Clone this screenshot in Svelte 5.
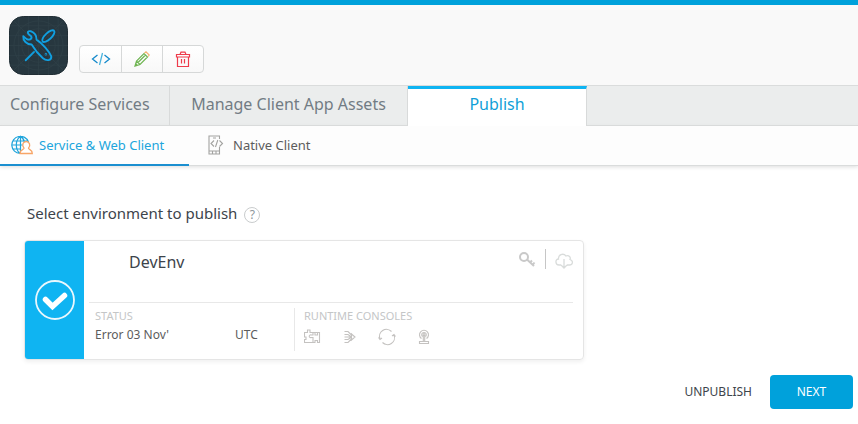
<script>
  const tabs = [
    { label: 'Configure Services' },
    { label: 'Manage Client App Assets' },
    { label: 'Publish', active: true }
  ];
</script>

<div class="page">
  <header>
    <svg class="logo" viewBox="0 0 60 60" role="img" aria-label="App logo">
      <rect x="0.5" y="0.5" width="59" height="59" rx="14" fill="#27373f" stroke="#1f2c33" />
      <g fill="none" stroke="#304149" stroke-width="0.700">
        <path d="M10 1V59M20 0V60M30 0V60M40 0V60M50 1V59M1 10H59M0 20H60M0 30H60M0 40H60M1 50H59M4 4L56 56M56 4L4 56" />
        <circle cx="30" cy="30" r="25" /><circle cx="30" cy="30" r="17" />
      </g>
      <g fill="none" stroke="#109fe0" stroke-width="1.900" stroke-linecap="round" stroke-linejoin="round">
        <path d="M22 15.500C26 17 28 20 28 24C34 28 41 36 43 41C43.500 45.500 38 46 34.500 43C30 39 26 34 23 29C18 29 14 25 14.500 20.500L18 23.500C21 25 24 23 22.500 20.500L20 18.500C18 16 20 15 22 15.500Z" />
        <ellipse cx="40" cy="20.500" rx="8" ry="3.200" transform="rotate(-43 40 20.500)" />
        <path d="M25.500 36.500L17 45" /><circle cx="37.500" cy="39" r="0.300" />
      </g>
    </svg>
    <div class="tools">
      <button aria-label="View code">
        <svg width="20" height="16" viewBox="0 0 20 16" fill="none" stroke="#168acb" stroke-width="1.300"><path d="M6.500 4L1.500 8L6.500 12M13.500 4L18.500 8L13.500 12" /><path d="M11.500 2L8.500 14" stroke="#49b3de" /></svg>
      </button>
      <button aria-label="Edit">
        <svg width="16" height="16" viewBox="0 0 16 16" fill="none" stroke="#6fb552" stroke-width="1.200"><path d="M1 15L2.500 10L10 2.500L13.500 6L6 13.500ZM2.500 10L6 13.500M4 11.500L11.500 4M1 15L3 13" /><path d="M10.500 2L12 0.800L15.200 4L14 5.500" stroke="#f5b071" /></svg>
      </button>
      <button aria-label="Delete">
        <svg width="16" height="17" viewBox="0 0 16 17" fill="none" stroke="#ee3b4b" stroke-width="1.200"><path d="M1.500 3.500H14.500V6H1.500ZM2.500 6V15.500H13.500V6M5 3.500L6 1.200H10L11 3.500M6.500 8V12.500M9.500 8V12.500" /></svg>
      </button>
    </div>
  </header>

  <nav class="tabs" aria-label="Application">
    {#each tabs as tab}
      <a href="#tab" class:active={tab.active} aria-current={tab.active ? 'page' : undefined}>{tab.label}</a>
    {/each}
  </nav>

  <nav class="subtabs" aria-label="Publish target">
    <a href="#web" class="active" aria-current="page">
      <svg width="22" height="20" viewBox="0 0 22 20" fill="none" stroke="#20a5dc" stroke-width="1.200">
        <path d="M9 18.500A8.600 8.600 0 1 1 17.500 7M9 18.500C4 14 4 5 9.500 1.200C12 3 13.300 5 13.500 7.500M9.500 1.200V18M1.500 6H16.500M1 10H12M2 14H9.500" />
        <path d="M13 13.200C10.500 10 12 6.500 15.200 6.500S20 10 17.500 13.200C17.500 14.500 21.300 14.500 21.300 18.500H9C9 14.500 13 14.500 13 13.200Z" fill="#fff" stroke="#f7a567" stroke-width="1.300" />
      </svg>
      <span>Service &amp; Web Client</span>
    </a>
    <a href="#native">
      <svg width="16" height="20" viewBox="0 0 16 20" fill="none" stroke="#a3a3a1" stroke-width="1.100">
        <path d="M11.500 4V1H1V19H11.500V12M1 16H11.500M5 3H8M4.500 16V19M8 16V19M6 5.500L3 8.500L6 11.500M11.500 5.500L14.500 8.500L11.500 11.500M9.800 5L7.500 12" />
      </svg>
      <span>Native Client</span>
    </a>
  </nav>

  <main>
    <div class="heading">
      <h1>Select environment to publish</h1>
      <button class="help" aria-label="Help">?</button>
    </div>

    <section class="card">
      <label class="pick">
        <input type="checkbox" checked aria-label="Select DevEnv" />
        <svg viewBox="0 0 40 40" aria-hidden="true"><circle cx="20" cy="20" r="19" fill="none" stroke="#e9f7fd" stroke-width="1.800" /><path d="M10.500 19.500L17.500 26.500L29.500 15.500" fill="none" stroke="#fff" stroke-width="5.500" stroke-linecap="round" stroke-linejoin="miter" /></svg>
      </label>
      <div class="body">
        <div class="top">
          <h2>DevEnv</h2>
          <div class="actions">
            <button aria-label="Keys">
              <svg width="18" height="17" viewBox="0 0 18 17" fill="none" stroke="#c9c9c9" stroke-width="2"><circle cx="6" cy="6" r="4" /><path d="M9 8.500L16 15M12 11.500L14 9.500M14.500 14L16.500 11.500" /></svg>
            </button>
            <button class="download" aria-label="Download">
              <svg width="18" height="16" viewBox="0 0 18 16" fill="none" stroke="#d9dcdb" stroke-width="1.300"><path d="M6 12H4C0 12 0 6 3.500 6C3 2 8 -0.500 11 3C14 2 16 4 15 6.500C19 8 17.500 12 14.500 12H12M9 6V15M6 12L9 15L12 12" /></svg>
            </button>
          </div>
        </div>
        <div class="bottom">
          <div class="status">
            <h3>STATUS</h3>
            <p><span>Error 03 Nov'</span><span>UTC</span></p>
          </div>
          <div class="consoles">
            <h3>RUNTIME CONSOLES</h3>
            <div class="icons">
              <button aria-label="Integration console">
                <svg width="18" height="16" viewBox="0 0 18 16"><path d="M0.500 3.500H3.500V1H6V3.500H9V6H7.500C4.500 5 4.500 9.500 7.500 8.500H9V13.500H0.500V10.500H2V8H0.500ZM9 3.500H15.500V13.500H13.500V11.500H11V13.500H9M11 3.500V6H13.500V3.500" /></svg>
              </button>
              <button aria-label="Orchestration console">
                <svg width="18" height="16" viewBox="0 0 18 16"><path d="M3.500 2.500H7L10.500 6M3.500 5.500H7L10.500 8M3.500 8H10.500M3.500 10.500H7L10.500 8M3.500 13.500H7L10.500 10M10.500 5L14 8L10.500 11Z" /></svg>
              </button>
              <button aria-label="Sync console">
                <svg width="18" height="18" viewBox="0 0 18 18"><path d="M2 11A7 7 0 0 1 13.500 3.500M16 7A7 7 0 0 1 4.500 14.500M0.500 9.500L2 11.500L4 10M17.500 8.500L16 6.500L14 8" /></svg>
              </button>
              <button aria-label="Messaging console">
                <svg width="18" height="16" viewBox="0 0 18 16"><path d="M6.500 9.500A4.500 4.500 0 1 1 11.500 9.500M7.500 7.500A2.300 2.300 0 1 1 10.500 7.500M8.300 6V12M9.700 6V12M4.500 14.500H13.500V12.500H4.500Z" /><circle cx="9" cy="5.500" r="1" /></svg>
              </button>
            </div>
          </div>
        </div>
      </div>
    </section>
  </main>

  <footer>
    <button class="plain">UNPUBLISH</button>
    <button class="next">NEXT</button>
  </footer>
</div>

<style>
  :global(body) { margin: 0; background: #fff; }
  .page { font-family: "Noto Sans", "Open Sans", sans-serif; color: #3d444b; border-top: 5px solid #00a1db; }
  .page :global(*) { box-sizing: border-box; }
  svg { display: block; flex: none; }
  button { font: inherit; color: inherit; background: none; border: 0; padding: 0; cursor: pointer; }
  a { color: inherit; text-decoration: none; }
  h1, h2, h3, p { margin: 0; font-weight: 400; }

  header { display: flex; align-items: center; gap: 11px; height: 80px; padding: 0 9px; background: #f9f9f9; }
  .logo { width: 59px; height: 59px; }
  .tools { display: flex; height: 28px; margin-top: 28px; border: 1px solid #d6d8d8; border-radius: 4px; overflow: hidden; background: linear-gradient(#fff, #f8f8f8); }
  .tools button { width: 41px; display: flex; align-items: center; justify-content: center; }
  .tools button + button { border-left: 1px solid #d6d8d8; }

  .tabs { display: flex; height: 41px; background: #ebeded; border-top: 1px solid #dadcdc; box-shadow: inset 0 -1px #d8dada; font-size: 16px; line-height: 24px; color: #727c84; }
  .tabs a { padding: 6px 20px 0; border-right: 1px solid #d8dada; width: 238px; text-align: center; white-space: nowrap; }
  .tabs a:first-child { width: 170px; padding-left: 10px; text-align: left; }
  .tabs .active { width: 179px; background: #fff; color: #0f9fd8; border-top: 3px solid #0fb4f2; padding-top: 3px; }

  .subtabs { display: flex; height: 40px; background: #fdfdfd; border-bottom: 1px solid #dadcdc; box-shadow: 0 1px 4px #ddd; font-size: 13px; line-height: 20px; color: #5c5c5c; }
  .subtabs a { display: flex; align-items: center; gap: 6px; height: 40px; padding: 0 20px 0 11px; border-bottom: 2px solid transparent; white-space: nowrap; }
  .subtabs .active { width: 189px; color: #20a5dc; border-bottom-color: #1b8fd0; }
  .subtabs a + a { padding-left: 19px; gap: 9px; }

  main { padding: 35px 24px 0; }
  .heading { display: flex; align-items: center; gap: 7px; height: 24px; padding-left: 3px; }
  h1 { font-size: 15px; line-height: 24px; }
  .help { width: 16px; height: 16px; margin-top: 4px; border: 1px solid #c9cccd; border-radius: 50%; color: #8d969c; font-size: 12px; line-height: 14px; }

  .card { display: flex; max-width: 560px; margin-top: 15px; border: 1px solid #e5e5e5; border-radius: 4px; overflow: hidden; box-shadow: 0 2px 4px #f0f0f0; }
  .pick { flex: none; width: 59px; display: grid; place-items: center; background: #0fb4f2; cursor: pointer; }
  .pick input { appearance: none; margin: 0; width: 40px; height: 40px; grid-area: 1 / 1; }
  .pick svg { width: 40px; height: 40px; grid-area: 1 / 1; pointer-events: none; }
  .body { flex: 1; padding: 0 10px 0 5px; }
  .top { display: flex; justify-content: space-between; align-items: flex-start; height: 62px; padding: 8px 0 0 40px; border-bottom: 1px solid #e8e8e8; }
  h2 { font-size: 16px; line-height: 26px; }
  .actions { display: flex; align-items: center; height: 20px; }
  .actions button { display: flex; align-items: center; height: 20px; padding-right: 9px; }
  .actions .download { border-left: 1px solid #c6c6c6; padding: 3px 0 0 9px; }
  .bottom { display: flex; padding: 5px 0 8px; }
  .status { width: 206px; height: 43px; padding-left: 6px; border-right: 1px solid #e8e8e8; }
  .consoles { padding-left: 9px; }
  h3 { font-size: 11px; line-height: 16px; color: #c4c6c7; }
  .status p { display: flex; font-size: 12px; line-height: 22px; color: #5c5c5c; }
  .status span:first-child { width: 140px; }
  .icons { display: flex; gap: 19px; height: 26px; }
  .icons button { display: flex; align-items: center; }
  .icons path, .icons circle { fill: none; stroke: #c4c2c0; stroke-width: 1.100; }

  footer { display: flex; justify-content: flex-end; align-items: center; gap: 18px; padding: 15px 5px; font-size: 12px; line-height: 18px; }
  .next { width: 83px; height: 34px; border-radius: 4px; background: #00a1db; color: #fff; }
</style>
